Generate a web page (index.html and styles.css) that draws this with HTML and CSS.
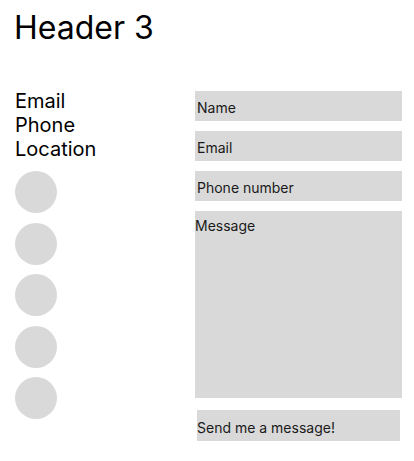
FILE: index.html
```html
<!DOCTYPE html>
<html lang="en">
<head>
<meta charset="utf-8">
<title>Contact</title>
<link rel="stylesheet" href="styles.css">
</head>
<body>
<main class="page">
  <h1 class="title">Header 3</h1>
  <section class="contact">
    <div class="info">
      <ul class="info-list">
        <li>Email</li>
        <li>Phone</li>
        <li>Location</li>
      </ul>
      <div class="socials">
        <span class="dot"></span>
        <span class="dot"></span>
        <span class="dot"></span>
        <span class="dot"></span>
        <span class="dot"></span>
      </div>
    </div>
    <form class="form">
      <input class="field" type="text" placeholder="Name">
      <input class="field" type="email" placeholder="Email">
      <input class="field" type="tel" placeholder="Phone number">
      <textarea class="field message" placeholder="Message"></textarea>
      <button class="send" type="button">Send me a message!</button>
    </form>
  </section>
</main>
</body>
</html>
```
FILE: styles.css
```css
* { box-sizing: border-box; }
html, body { margin: 0; padding: 0; background: #fff; }
body {
  font-family: Inter, "Noto Sans", sans-serif;
  color: #000;
}
.page {
  padding: 8px 12px 0 14px;
}
.title {
  margin: 0;
  font-size: 32px;
  font-weight: 400;
  line-height: 40px;
}
.contact {
  display: flex;
  margin-top: 41px;
}
.info {
  width: 181px;
  padding-left: 1px;
  display: flex;
  flex-direction: column;
}
.info-list {
  list-style: none;
  margin: 0;
  padding: 0;
  font-size: 20px;
  line-height: 24px;
}
.socials {
  margin-top: 10px;
  display: flex;
  flex-direction: column;
  gap: 9.5px;
}
.dot {
  display: block;
  width: 42px;
  height: 42px;
  border-radius: 50%;
  background: #d9d9d9;
}
.form {
  width: 207px;
  margin-top: 2px;
  display: flex;
  flex-direction: column;
  gap: 10px;
}
.field {
  display: block;
  width: 207px;
  height: 30px;
  margin: 0;
  border: 0;
  border-radius: 0;
  background: #d9d9d9;
  padding: 2px 0 0 2px;
  font-family: Inter, "Noto Sans", sans-serif;
  font-size: 14px;
  color: #000;
  outline: none;
}
.field::placeholder { color: #1a1a1a; opacity: 1; }
.message {
  height: 187px;
  padding: 6px 0 0 0;
  resize: none;
  line-height: 17px;
}
.send {
  display: block;
  width: 203px;
  height: 31px;
  margin: 2px 0 0 2px;
  border: 0;
  border-radius: 0;
  background: #d9d9d9;
  padding: 3px 0 0 0;
  text-align: left;
  font-family: Inter, "Noto Sans", sans-serif;
  font-size: 14px;
  color: #1a1a1a;
}
```
